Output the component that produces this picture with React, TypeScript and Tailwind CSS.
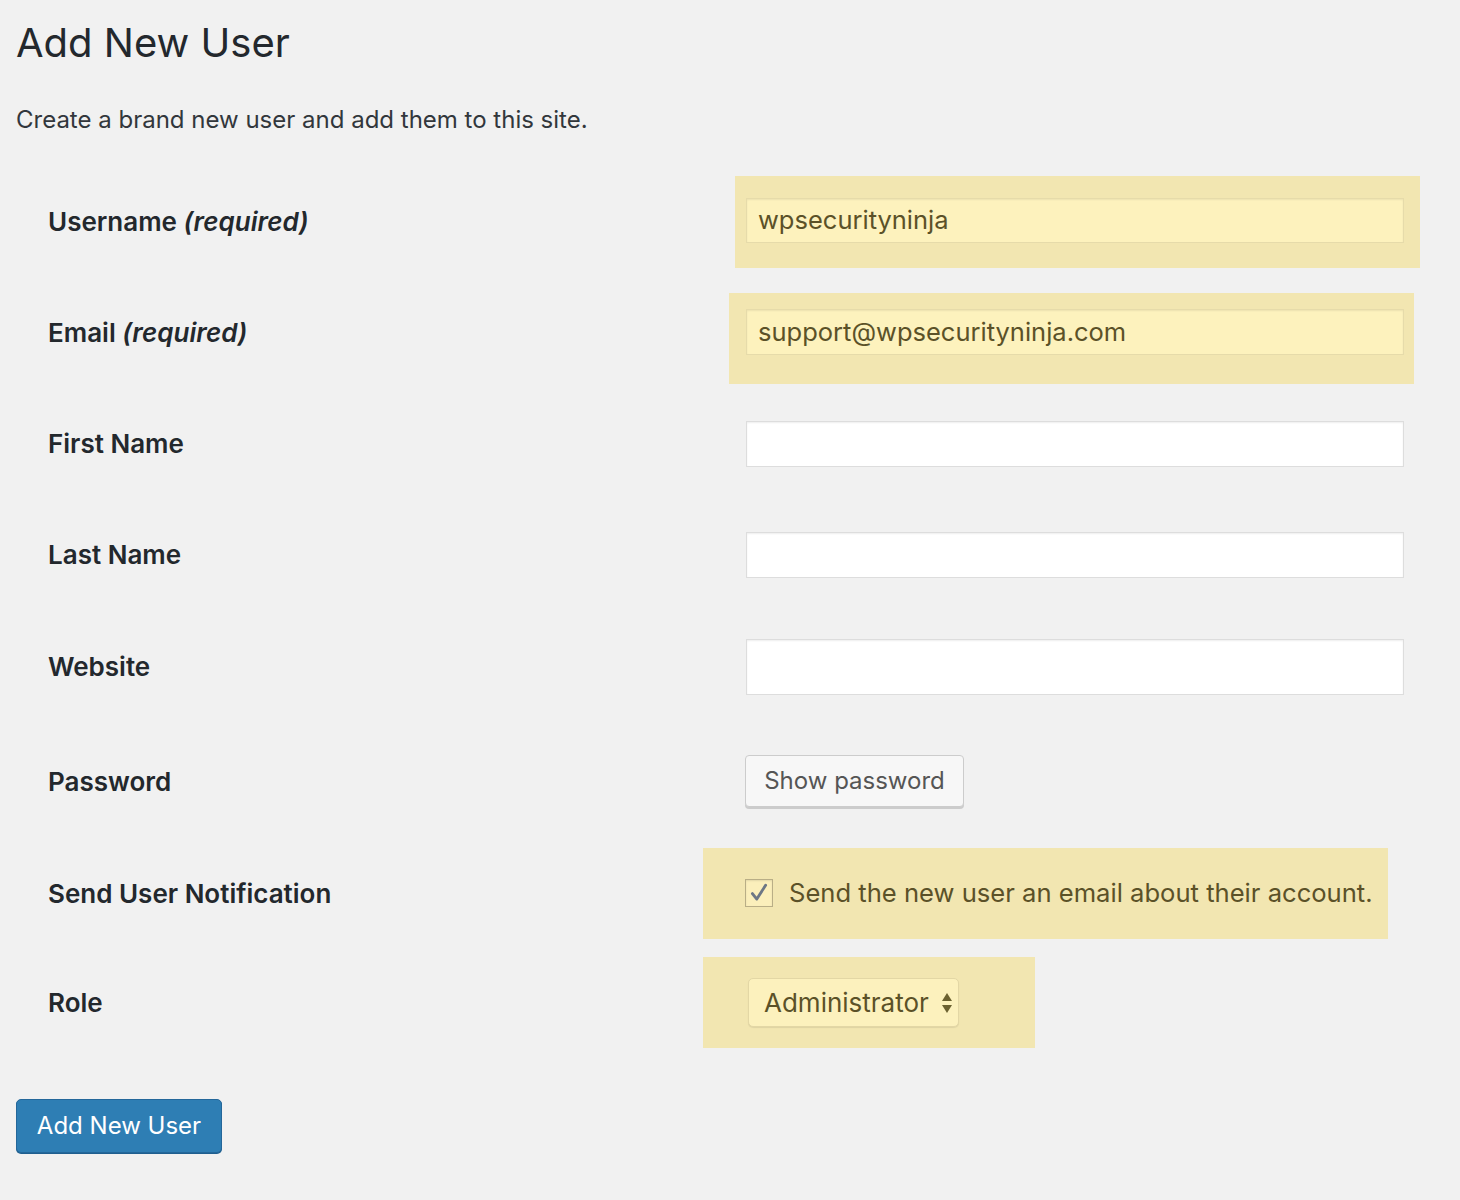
import React from "react";

const font = { fontFamily: "Inter, 'Noto Sans', sans-serif" };

function Label({ children }: { children: React.ReactNode }) {
  return <div className="w-[730px] shrink-0 pl-[32px] text-[26px] font-semibold text-[#23282d]">{children}</div>;
}

export default function App() {
  return (
    <div className="min-h-[1200px] w-[1460px] bg-[#f1f1f1] pl-[16px]" style={font}>
      <h1 className="pt-[14px] text-[40px] font-normal leading-[58px] text-[#23282d]">Add New User</h1>
      <p className="mt-[32px] text-[24px] leading-[32px] text-[#32373c]">Create a brand new user and add them to this site.</p>

      <div className="mt-[30px] flex flex-col">
        <div className="flex h-[111px] items-center">
          <Label>
            Username <em className="font-semibold">(required)</em>
          </Label>
          <div className="ml-[-11px] w-[685px] bg-[#f2e6b1] pb-[25px] pl-[11px] pr-[16px] pt-[22px]">
            <div className="flex h-[45px] items-center border border-[#e6dbaa] bg-[#fdf2bd] pl-[11px] text-[25.5px] text-[#5b5128] shadow-[inset_0_1px_2px_rgba(0,0,0,0.07)]">wpsecurityninja</div>
          </div>
        </div>
        <div className="flex h-[111px] items-center">
          <Label>
            Email <em className="font-semibold">(required)</em>
          </Label>
          <div className="ml-[-17px] mt-[12px] w-[685px] bg-[#f2e6b1] pb-[29px] pl-[17px] pr-[10px] pt-[16px]">
            <div className="flex h-[46px] items-center border border-[#e6dbaa] bg-[#fdf2bd] pl-[11px] text-[25.5px] text-[#5b5128] shadow-[inset_0_1px_2px_rgba(0,0,0,0.07)]">support@wpsecurityninja.com</div>
          </div>
        </div>
        <div className="flex h-[111px] items-center">
          <Label>First Name</Label>
          <div className="h-[46px] w-[658px] border border-[#dddddd] bg-white shadow-[inset_0_1px_2px_rgba(0,0,0,0.07)]" />
        </div>
        <div className="flex h-[111px] items-center">
          <Label>Last Name</Label>
          <div className="h-[46px] w-[658px] border border-[#dddddd] bg-white shadow-[inset_0_1px_2px_rgba(0,0,0,0.07)]" />
        </div>
        <div className="flex h-[113px] items-center">
          <Label>Website</Label>
          <div className="h-[56px] w-[658px] border border-[#dddddd] bg-white shadow-[inset_0_1px_2px_rgba(0,0,0,0.07)]" />
        </div>
        <div className="flex h-[116px] items-center">
          <Label>Password</Label>
          <button className="ml-[-1px] flex h-[52px] w-[219px] items-center justify-center rounded-[4px] border border-[#cccccc] bg-[#f7f7f7] text-[24px] text-[#555555] shadow-[0_2px_0_#cccccc]">
            Show password
          </button>
        </div>
        <div className="flex h-[108px] items-center">
          <Label>Send User Notification</Label>
          <div className="ml-[-43px] flex h-[91px] w-[685px] items-center bg-[#f2e6b1] pl-[42px]">
            <div className="flex h-[28px] w-[28px] items-center justify-center border border-[#b9ae86] bg-[#fbefbb] shadow-[inset_0_1px_2px_rgba(0,0,0,0.1)]">
              <svg width="22" height="22" viewBox="0 0 20 20">
                <path d="M4 10.5 L8 15.5 L16 3" fill="none" stroke="#6d7785" strokeWidth="2.6" strokeLinecap="round" strokeLinejoin="round" />
              </svg>
            </div>
            <span className="ml-[16px] text-[25.6px] text-[#5b5128]">Send the new user an email about their account.</span>
          </div>
        </div>
        <div className="flex h-[111px] items-center">
          <Label>Role</Label>
          <div className="ml-[-43px] flex h-[91px] w-[332px] items-center bg-[#f2e6b1] pl-[45px]">
            <div className="flex h-[49px] w-[211px] items-center rounded-[5px] border border-[#e3d7a5] bg-[#fcf1bd] pl-[15px] text-[26px] text-[#5b5128] shadow-[0_1px_1px_rgba(0,0,0,0.08)]">
              <span>Administrator</span>
              <svg className="ml-[12px]" width="12" height="24" viewBox="0 0 12 24">
                <path d="M6 2 L11 10 L1 10 Z" fill="#6b6130" />
                <path d="M6 22 L11 14 L1 14 Z" fill="#6b6130" />
              </svg>
            </div>
          </div>
        </div>
      </div>

      <button className="mt-[41px] flex h-[54px] w-[206px] items-center justify-center rounded-[5px] border border-[#24679a] bg-[#2e7eb4] text-[24px] text-white shadow-[0_1px_0_#1f5f8f]">
        Add New User
      </button>
    </div>
  );
}
